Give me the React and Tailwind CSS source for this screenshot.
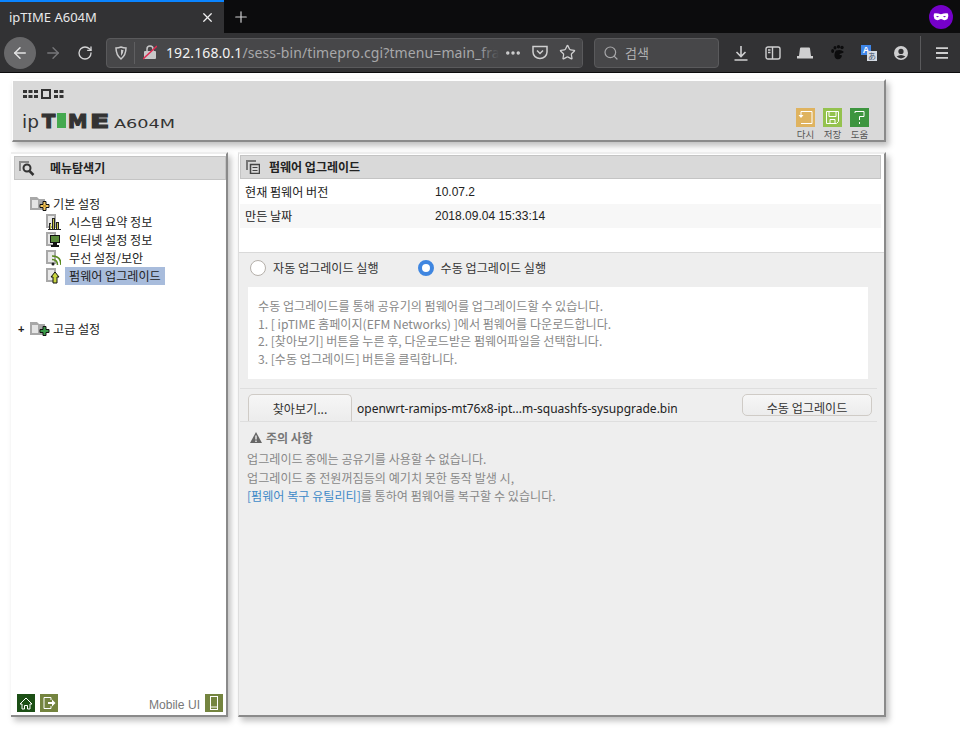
import { ArrowLeft, ArrowRight, RotateCw, Star, Search, Plus, X, MoreHorizontal } from "lucide-react";

const kr = "font-['Noto_Sans_CJK_KR','Noto_Sans',sans-serif]";
const arial = "font-['Liberation_Sans','Noto_Sans_CJK_KR',sans-serif]";

function ToolbarIcons() {
    return (
        <div className="flex items-center h-full">
            <svg width="16" height="16" viewBox="0 0 16 16" className="ml-[14px]" fill="none" stroke="#cfcfd0" strokeWidth="1.6">
                <path d="M8 1v10M3.5 7 8 11.5 12.5 7M1.500 15h13" />
            </svg>
            <svg width="16" height="14" viewBox="0 0 16 14" className="ml-[16px]" fill="none" stroke="#cfcfd0" strokeWidth="1.4">
                <rect x="1" y="1" width="14" height="12" rx="2" />
                <path d="M7.5 1v12M3 4h2.500M3 6.500h2.500" />
            </svg>
            <svg width="16" height="12" viewBox="0 0 16 12" className="ml-[16px]" fill="#cfcfd0">
                <path d="M3 1.500Q3 .5 4 .5h8q1 0 1 1L14 9h2v2.500H0V9h2z" />
            </svg>
            <svg width="13" height="15" viewBox="0 0 13 15" className="ml-[18px]" fill="#0c0c0d">
                <path d="M5 5.500q5-1.500 7.500 1 .5 1-1 1.500-3 .5-3 1.500 0 .8 2 .5 1 1-.5 3Q8 15 5.500 14 3 12.500 3.500 9 4 6.500 5 5.500z" />
                <ellipse cx="1.600" cy="6" rx="1.500" ry="1.900" />
                <ellipse cx="4" cy="2.800" rx="1.500" ry="1.800" />
                <ellipse cx="7.500" cy="1.800" rx="1.700" ry="1.800" />
                <ellipse cx="11" cy="2.500" rx="1.700" ry="1.800" />
            </svg>
            <div className="relative w-4 h-4 ml-[17px]">
                <div className="absolute left-0 top-0 w-[10px] h-[10px] bg-[#3f86e8] text-white text-[9px] leading-[10px] text-center font-bold font-['Liberation_Sans',sans-serif]">A</div>
                <div className={`absolute left-[6px] top-[6px] w-[10px] h-[10px] bg-[#d5dbe3] text-[#47566e] text-[8px] leading-[10px] text-center ${kr}`}>あ</div>
            </div>
            <svg width="14" height="14" viewBox="0 0 14 14" className="ml-[17px]">
                <circle cx="7" cy="7" r="7" fill="#cfcfd0" />
                <circle cx="7" cy="5.400" r="2.600" fill="#323234" />
                <path d="M2.600 10.600Q7 7.400 11.400 10.600 9.500 12.400 7 12.400T2.600 10.600z" fill="#323234" />
            </svg>
            <div className="w-px h-[34px] bg-[#5a5a5c] ml-[12px]" />
            <svg width="12" height="12" viewBox="0 0 12 12" className="ml-[15px]" fill="none" stroke="#cfcfd0" strokeWidth="1.8">
                <path d="M0 1.200h12M0 6h12M0 10.800h12" />
            </svg>
        </div>
    );
}

function BrowserBar() {
    return (
        <div className="shrink-0 font-['Noto_Sans',sans-serif]">
            <div className="h-[33px] bg-[#0c0c0d] flex items-stretch">
                <div className="w-[224px] bg-[#323234] border-t-2 border-[#0a84ff] flex items-center pl-[9px] pr-[9px] justify-between">
                    <span className="text-[13px] text-[#e8e8e9] pt-[1px]">ipTIME A604M</span>
                    <X size={15} color="#f0f0f0" strokeWidth={2} />
                </div>
                <div className="w-[34px] flex items-center justify-center">
                    <Plus size={18} color="#d0d0d1" strokeWidth={1.6} />
                </div>
                <div className="flex-1" />
                <div className="flex items-center pr-[7px] pt-[1px]">
                    <div className="w-6 h-6 rounded-full bg-[#7500c9] flex items-center justify-center">
                        <svg width="16" height="8" viewBox="0 0 16 8" fill="#fff">
                            <path fillRule="evenodd" d="M1 .5Q4 0 8 1.200 12 0 15 .5q1 3-.5 5.500Q12 8 9.500 6.500 8 5.300 6.500 6.500 4 8 1.500 6 0 3.500 1 .5zM3 3.500q1.500 1.500 3 0-1.500-1-3 0zm7 0q1.500 1.500 3 0-1.500-1-3 0z" />
                        </svg>
                    </div>
                </div>
            </div>
            <div className="h-[40px] bg-[#323234] flex items-center border-b border-[#0c0c0d]">
                <div className="w-8 h-8 rounded-full bg-[#68686a] ml-[4px] flex items-center justify-center">
                    <ArrowLeft size={18} color="#e4e4e5" strokeWidth={2} />
                </div>
                <ArrowRight size={18} color="#77777a" strokeWidth={1.8} className="ml-[8px]" />
                <RotateCw size={16} color="#d4d4d5" strokeWidth={2} className="ml-[15px]" />
                <div className="ml-[13px] w-[477px] h-[30px] rounded-[4px] bg-[#474749] border border-[#5a5a5c] flex items-center relative overflow-hidden">
                    <svg width="12" height="14" viewBox="0 0 12 14" className="ml-[8px]" fill="none" stroke="#c8c8c9" strokeWidth="1.5">
                        <path d="M6 1q2.500 1 5 1 0 7-5 11Q1 9 1 2q2.500 0 5-1z" />
                        <path d="M6 3.500q1.200.5 2.500.5 0 3.500-2.500 6z" fill="#c8c8c9" stroke="none" />
                    </svg>
                    <div className="w-px h-[22px] bg-[#5f5f61] ml-[7px]" />
                    <svg width="14" height="15" viewBox="0 0 14 15" className="ml-[8px]">
                        <rect x="1" y="6" width="12" height="8" rx="1" fill="#c8c8c9" />
                        <path d="M4 6V4a3 3 0 0 1 6 0v2" fill="none" stroke="#c8c8c9" strokeWidth="1.5" />
                        <path d="M0 14 14 1" stroke="#e22850" strokeWidth="1.5" />
                    </svg>
                    <div className="ml-[9px] whitespace-nowrap text-[14px] tracking-[0.1px] text-[#f3f3f3]">
                        192.168.0.1<span className="text-[#a8a8aa]">/sess-bin/timepro.cgi?tmenu=main_fra</span>
                    </div>
                    <div className="absolute left-[372px] top-0 h-full w-[20px] bg-linear-to-r from-transparent to-[#474749]" />
                    <div className="absolute right-0 top-0 h-full flex items-center bg-[#474749] pl-[5px] pr-[6px]">
                        <MoreHorizontal size={18} color="#d0d0d1" strokeWidth={2.6} />
                        <svg width="16" height="15" viewBox="0 0 16 15" className="ml-[10px]" fill="none" stroke="#cfcfd0" strokeWidth="1.5">
                            <path d="M1 1.500h14V7a7 6.500 0 0 1-14 0zM5 5.500l3 3 3-3" />
                        </svg>
                        <Star size={17} color="#cfcfd0" strokeWidth={1.8} className="ml-[11px]" />
                    </div>
                </div>
                <div className="ml-[11px] w-[125px] h-[30px] rounded-[4px] bg-[#474749] border border-[#5a5a5c] flex items-center pl-[8px]">
                    <Search size={16} color="#a8a8aa" strokeWidth={1.8} />
                    <span className={`ml-[6px] text-[13px] text-[#b0b0b1] ${kr}`}>검색</span>
                </div>
                <ToolbarIcons />
            </div>
        </div>
    );
}

function Logo() {
    const heavy = "font-bold text-[19.500px] leading-[20px] [-webkit-text-stroke:1.200px_#333]";
    return (
        <div className="ml-[8px]">
            <svg width="41" height="10" viewBox="0 0 41 10" fill="#333" className="ml-[1px]">
                <path d="M0 1h4v3H0zM5.500 1h4v3h-4zM11 1h4v3h-4zM0 6h4v3H0zM5.500 6h4v3h-4zM11 6h4v3h-4zM31 1h4v3h-4zM36.500 1h4v3h-4zM31 6h4v3h-4zM36.500 6h4v3h-4z" />
                <path fillRule="evenodd" d="M18 0h10v10H18zM20 2v6h6V2z" />
            </svg>
            <div className="flex items-baseline mt-[13px] h-[20px] text-[#333] font-['DejaVu_Sans',sans-serif]">
                <span className="w-[20px] text-[18.500px] leading-[20px]">ip</span>
                <span className={`w-[15px] ${heavy}`}>T</span>
                <span className="w-[9px] h-[15px] bg-[#45a94f]" />
                <span className={`w-[22px] ml-[2px] ${heavy}`}>M</span>
                <span className={`w-[24px] inline-block scale-x-[1.45] origin-left ${heavy}`}>E</span>
                <span className="w-[61px] inline-block text-[13px] leading-[20px] scale-x-[1.36] origin-left whitespace-nowrap">A604M</span>
            </div>
        </div>
    );
}

function HeaderBtn({ color, label, children }) {
    return (
        <div className="flex flex-col items-center w-[19px]">
            <div className="w-[19px] h-[19px] flex items-center justify-center shrink-0" style={{ background: color }}>
                {children}
            </div>
            <span className={`mt-[1px] text-[9.500px] leading-[12px] text-[#555] whitespace-nowrap ${kr}`}>{label}</span>
        </div>
    );
}

function Header() {
    return (
        <div className="h-[63px] ml-[12px] w-[874px] bg-[#d9d9d9] border-t-2 border-l border-white border-r-2 border-b-2 border-r-[#8a8a8a] border-b-[#8a8a8a] shadow-[3px_4px_6px_rgba(0,0,0,0.25)] flex justify-between pl-[1px] pt-[8px]">
            <Logo />
            <div className="flex gap-[8px] pr-[15px] pt-[19px]">
                <HeaderBtn color="#dfb35f" label="다시">
                    <svg width="15" height="15" viewBox="0 0 15 15" fill="none" stroke="#fff" strokeWidth="1">
                        <path d="M3 5V1.500h11v12H3" />
                        <path d="M.5 5h5L3 8z" fill="#fff" stroke="none" />
                    </svg>
                </HeaderBtn>
                <HeaderBtn color="#94c24e" label="저장">
                    <svg width="15" height="15" viewBox="0 0 15 15" fill="none" stroke="#fff" strokeWidth="1">
                        <path d="M1.500 1.500h12v10l-2 2h-10z" />
                        <path d="M4 1.500v5h7v-5M5 13.500v-4h5v4" />
                    </svg>
                </HeaderBtn>
                <HeaderBtn color="#3d953f" label="도움">
                    <svg width="15" height="15" viewBox="0 0 15 15" fill="none" stroke="#fff" strokeWidth="1">
                        <path d="M3 3V1.500h9v5H7.500V10" />
                        <path d="M7 12h1v2H7z" fill="#fff" stroke="none" />
                    </svg>
                </HeaderBtn>
            </div>
        </div>
    );
}

function FolderIcon({ plus, dot }) {
    return (
        <svg width="23" height="15" viewBox="0 0 23 15" className="shrink-0">
            <path d="M0 0h7l2 2h6v11H0z" fill="#a8a8a8" />
            <path d="M2 3h6v8H2z" fill="#e4e4e4" />
            <path d="M10 6h3V3h3v3h3v3h-3v3h-3V9h-3z" transform="translate(0 1.500)" fill={plus} stroke="#111" strokeWidth="1" />
            {dot && <path d="M13 8h3v2h-3z" fill="#c79a30" />}
        </svg>
    );
}

function LeafIcon({ kind }) {
    return (
        <svg width="15" height="16" viewBox="0 0 15 16" className="shrink-0">
            <path d="M0 0h10v14H0z" fill="#a8a8a8" />
            <path d="M2 2h6v10H2z" fill="#e8e8e8" />
            {kind === "chart" && (
                <g>
                    <path d="M3 9h2v6H3zM6 4h3v11H6zM10 8h3v7h-3z" fill="#222" />
                    <path d="M4 10h1v5H4zM7 5h1v10H7zM11 9h1v6h-1z" fill="#c4c44a" />
                    <path d="M2 15h13v1H2z" fill="#222" />
                </g>
            )}
            {kind === "screen" && (
                <g>
                    <path d="M4 3h10v8H4z" fill="#111" />
                    <path d="M5 4h8v6H5z" fill="#5a8a3a" />
                    <path d="M7 11h4v2h2v2H5v-2h2z" fill="#111" />
                </g>
            )}
            {kind === "wifi" && (
                <g fill="none" stroke="#5a8a20" strokeWidth="1.500">
                    <path d="M6 6q9 0 9 9M6 9.500q5.500 0 5.500 5.500" />
                    <circle cx="7" cy="14" r="1.500" fill="#222" stroke="none" />
                </g>
            )}
            {kind === "up" && <path d="M9 4l4 5h-2v6H7V9H5z" fill="#c9d640" stroke="#111" strokeWidth="1" />}
        </svg>
    );
}

function TreeLeaf({ kind, label, active }) {
    return (
        <div className="flex items-center h-[18px] pl-[32px]">
            <LeafIcon kind={kind} />
            <span className={`ml-[4px] px-[4px] h-[18px] leading-[18px] text-[12.100px] text-[#222] ${kr} ${active ? "bg-[#a8bcdc]" : ""}`}>{label}</span>
        </div>
    );
}

function SideBtn({ color, children }) {
    return <div className="w-[18px] h-[18px] flex items-center justify-center" style={{ background: color }}>{children}</div>;
}

function LeftPanel() {
    return (
        <div className="w-[217px] h-[565px] bg-white border-t-2 border-r-2 border-b-2 border-t-[#eee] border-r-[#8a8a8a] border-b-[#8a8a8a] shadow-[3px_4px_6px_rgba(0,0,0,0.25)] flex flex-col pt-[2px] pl-[3px]">
            <div className="h-[24px] bg-[#d9d9d9] border border-[#c4c4c4] flex items-center pl-[4px] shrink-0">
                <svg width="16" height="15" viewBox="0 0 16 15" fill="none" stroke="#333">
                    <path d="M1 10V1h9" stroke="#888" strokeWidth="2" />
                    <circle cx="8" cy="7" r="3.500" strokeWidth="2" />
                    <path d="M10.500 10l4 4" strokeWidth="2.500" />
                </svg>
                <span className={`ml-[15px] text-[12px] font-bold text-[#222] ${kr}`}>메뉴탐색기</span>
            </div>
            <div className="flex-1 pt-[15px]">
                <div className="flex items-center h-[18px] pl-[16px]">
                    <FolderIcon plus="#f5c860" dot />
                    <span className={`text-[12.100px] text-[#222] ${kr}`}>기본 설정</span>
                </div>
                <TreeLeaf kind="chart" label="시스템 요약 정보" />
                <TreeLeaf kind="screen" label="인터넷 설정 정보" />
                <TreeLeaf kind="wifi" label="무선 설정/보안" />
                <TreeLeaf kind="up" label="펌웨어 업그레이드" active />
                <div className="flex items-center h-[18px] mt-[35px] pl-[4px]">
                    <span className="w-[12px] text-[11px] font-bold text-[#222] font-['Liberation_Sans',sans-serif]">+</span>
                    <FolderIcon plus="#3a9a48" />
                    <span className={`text-[12.100px] text-[#222] ${kr}`}>고급 설정</span>
                </div>
            </div>
            <div className="flex items-center h-[18px] mb-[3px] pl-[3px] pr-[3px] shrink-0">
                <SideBtn color="#1c4f16">
                    <svg width="14" height="13" viewBox="0 0 14 13" fill="none" stroke="#fff">
                        <path d="M1 7 7 1l6 6h-2v5H8.500V8.500h-3V12H3V7z" />
                    </svg>
                </SideBtn>
                <div className="ml-[5px]">
                    <SideBtn color="#74843f">
                        <svg width="14" height="14" viewBox="0 0 14 14" fill="none" stroke="#fff">
                            <path d="M9 4V1.500H2v11h7V10" />
                            <path d="M6 6h4V3.500L13.500 7 10 10.500V8H6z" fill="#fff" stroke="none" />
                        </svg>
                    </SideBtn>
                </div>
                <span className={`ml-auto mr-[5px] pt-[5px] text-[12.100px] text-[#777] ${arial}`}>Mobile UI</span>
                <SideBtn color="#74843f">
                    <svg width="10" height="14" viewBox="0 0 10 14" fill="none" stroke="#fff">
                        <rect x="1.500" y=".5" width="7" height="13" />
                        <path d="M1.500 11h7" />
                    </svg>
                </SideBtn>
            </div>
        </div>
    );
}

function Radio({ checked, label }) {
    return (
        <div className="flex items-center">
            {checked ? (
                <div className="w-4 h-4 rounded-full border-[4.500px] border-[#3f86e0] bg-white" />
            ) : (
                <div className="w-4 h-4 rounded-full border border-[#b5b0aa] bg-white" />
            )}
            <span className={`ml-[7px] text-[12.100px] text-[#333] ${kr}`}>{label}</span>
        </div>
    );
}

function RightPanel() {
    return (
        <div className="ml-[10px] w-[648px] h-[565px] bg-white border-t-2 border-l border-r-2 border-b-2 border-t-[#eee] border-l-[#ddd] border-r-[#8a8a8a] border-b-[#8a8a8a] shadow-[3px_4px_6px_rgba(0,0,0,0.25)] flex flex-col pt-[1px]">
            <div className="h-[24px] ml-[1px] mr-[3px] bg-[#d9d9d9] border border-[#c4c4c4] flex items-center pl-[5px] shrink-0">
                <svg width="14" height="14" viewBox="0 0 14 14" fill="none" stroke="#444">
                    <path d="M1 10V1h9" stroke="#777" strokeWidth="2" />
                    <rect x="4.500" y="4.500" width="9" height="9" strokeWidth="1.500" fill="#d9d9d9" />
                    <path d="M6.500 7.500h5M6.500 10.500h5" />
                </svg>
                <span className={`ml-[9px] text-[12px] font-bold text-[#222] ${kr}`}>펌웨어 업그레이드</span>
            </div>
            <div className="ml-[1px] mr-[3px] pt-[1px] shrink-0">
                <div className="flex h-[24px] items-center pl-[5px]">
                    <span className={`w-[190px] text-[12.100px] text-[#222] ${kr}`}>현재 펌웨어 버전</span>
                    <span className={`text-[12px] text-[#222] ${arial}`}>10.07.2</span>
                </div>
                <div className="flex h-[24px] items-center pl-[5px] bg-[#f7f7f7]">
                    <span className={`w-[190px] text-[12.100px] text-[#222] ${kr}`}>만든 날짜</span>
                    <span className={`text-[12px] text-[#222] ${arial}`}>2018.09.04 15:33:14</span>
                </div>
                <div className="h-[24px]" />
            </div>
            <div className="flex-1 bg-[#eeeeee] border-t border-[#d9d9d9] flex flex-col">
                <div className="flex items-center h-[34px] pb-[3px] pl-[11px] gap-[39px] shrink-0">
                    <Radio label="자동 업그레이드 실행" />
                    <Radio checked label="수동 업그레이드 실행" />
                </div>
                <div className={`ml-[9px] mr-[16px] h-[92px] bg-white px-[10px] pt-[10px] text-[12.100px] leading-[17.700px] text-[#888] shrink-0 ${kr}`}>
                    <div>수동 업그레이드를 통해 공유기의 펌웨어를 업그레이드할 수 있습니다.</div>
                    <div>1. [ ipTIME 홈페이지(EFM Networks) ]에서 펌웨어를 다운로드합니다.</div>
                    <div>2. [찾아보기] 버튼을 누른 후, 다운로드받은 펌웨어파일을 선택합니다.</div>
                    <div>3. [수동 업그레이드] 버튼을 클릭합니다.</div>
                </div>
                <div className="mt-[9px] mx-[1px] mr-[7px] h-[34px] border-y border-[#dedede] flex items-end pl-[8px] shrink-0">
                    <div className={`w-[104px] h-[27px] rounded-t-[5px] bg-linear-to-b from-[#f6f6f6] to-[#ececec] border border-b-0 border-[#cfcbc6] text-center text-[12.100px] leading-[27px] text-[#333] ${kr}`}>찾아보기...</div>
                    <span className="ml-[5px] mb-[3px] text-[12px] leading-[18px] text-[#222] font-['Noto_Sans',sans-serif]">openwrt-ramips-mt76x8-ipt...m-squashfs-sysupgrade.bin</span>
                    <div className={`ml-auto mr-[5px] mb-[5px] w-[130px] h-[22px] rounded-[5px] bg-linear-to-b from-[#f6f6f6] to-[#ececec] border border-[#cfcbc6] text-center text-[12.100px] leading-[25px] text-[#333] ${kr}`}>수동 업그레이드</div>
                </div>
                <div className="pl-[8px] pt-[7px]">
                    <div className="flex items-center h-[17px] pl-[3px]">
                        <svg width="12" height="11" viewBox="0 0 12 11">
                            <path d="M6 0 12 11H0z" fill="#666" />
                            <path d="M5.300 3.500h1.400v4H5.300zM5.300 8.500h1.400V10H5.300z" fill="#eee" />
                        </svg>
                        <span className={`ml-[4px] text-[12px] font-bold text-[#777] ${kr}`}>주의 사항</span>
                    </div>
                    <div className={`mt-[4px] text-[12.100px] leading-[18.500px] text-[#888] ${kr}`}>
                        <div>업그레이드 중에는 공유기를 사용할 수 없습니다.</div>
                        <div>업그레이드 중 전원꺼짐등의 예기치 못한 동작 발생 시,</div>
                        <div><span className="text-[#3f8ac8]">[펌웨어 복구 유틸리티]</span>를 통하여 펌웨어를 복구할 수 있습니다.</div>
                    </div>
                </div>
            </div>
        </div>
    );
}

export default function App() {
    return (
        <div className="w-[960px] h-[749px] overflow-hidden bg-white flex flex-col">
            <BrowserBar />
            <div className="pt-[6px]">
                <Header />
                <div className="flex mt-[10px] ml-[11px]">
                    <LeftPanel />
                    <RightPanel />
                </div>
            </div>
        </div>
    );
}
